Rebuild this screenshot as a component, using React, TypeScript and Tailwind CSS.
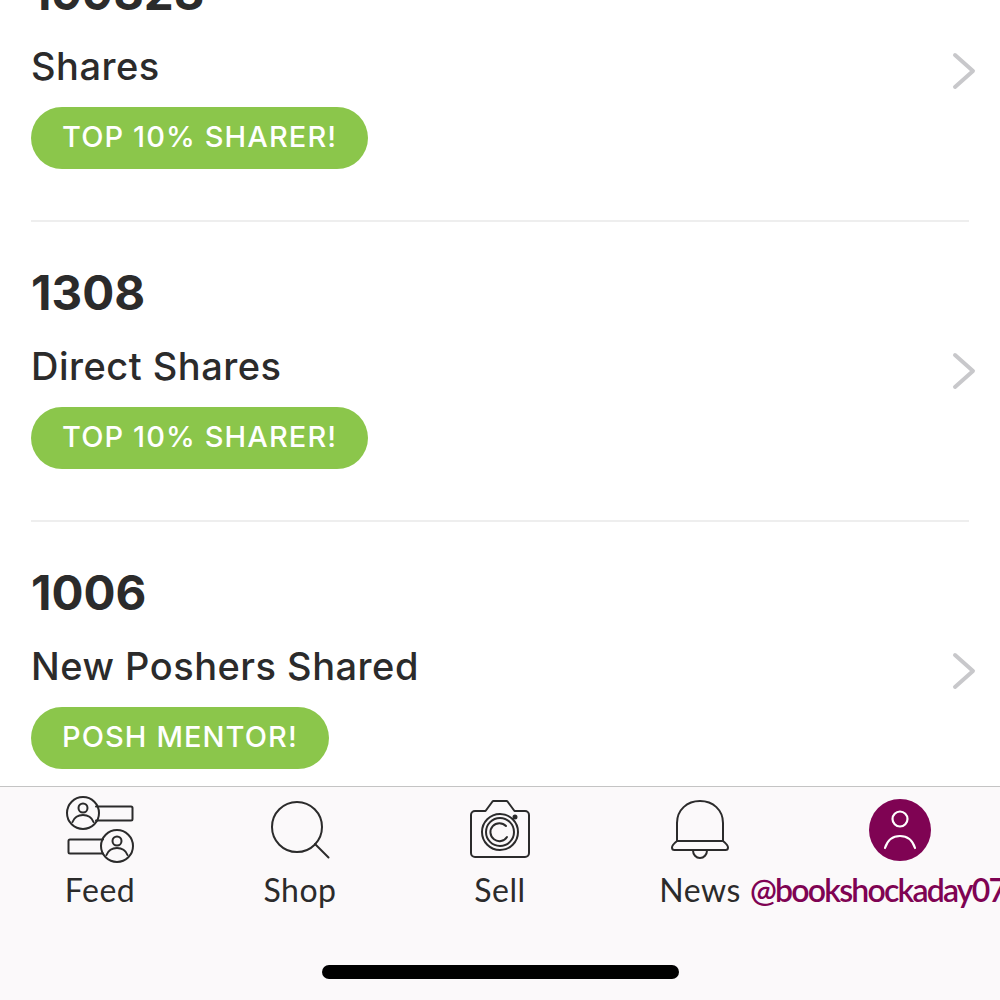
const rows = [
  { id: 'shares', count: '199323', label: 'Shares', badge: 'TOP 10% SHARER!' },
  { id: 'direct', count: '1308', label: 'Direct Shares', badge: 'TOP 10% SHARER!' },
  { id: 'new', count: '1006', label: 'New Poshers Shared', badge: 'POSH MENTOR!' },
];

function FeedIcon() {
  return (
    <svg width="72" height="70" viewBox="0 0 72 70" fill="none" stroke="#2b2b2b" strokeWidth="2" strokeLinecap="round" className="-ml-[2px]">
      <path d="M33 11.5h35a1.5 1.5 0 0 1 1.5 1.5v11a1.5 1.500 0 0 1-1.500 1.500H33" />
      <circle cx="20" cy="18" r="16" />
      <circle cx="20" cy="13" r="4.500" />
      <path d="M9.500 27c2-5 6-7 10.500-7s8.500 2 10.500 7" />
      <path d="M40 44.500H7a1.500 1.500 0 0 0-1.500 1.500v11a1.500 1.500 0 0 0 1.500 1.500h33" />
      <circle cx="54" cy="51" r="16" />
      <circle cx="54" cy="46" r="4.500" />
      <path d="M43.500 60c2-5 6-7 10.500-7s8.500 2 10.500 7" />
    </svg>
  );
}

function ShopIcon() {
  return (
    <svg width="60" height="60" viewBox="0 0 60 60" fill="none" stroke="#2b2b2b" strokeWidth="2" strokeLinecap="round">
      <circle cx="27" cy="27" r="25" />
      <path d="M45 44l13.500 13.500" />
    </svg>
  );
}

function SellIcon() {
  return (
    <svg width="60" height="60" viewBox="0 0 60 60" fill="none" stroke="#2b2b2b" strokeWidth="2" strokeLinejoin="round" strokeLinecap="round">
      <path d="M5 11h10.500l7-9.500a1.500 1.500 0 0 1 1-.5h13a1.500 1.500 0 0 1 1 .5l7 9.500H55a4 4 0 0 1 4 4v38a4 4 0 0 1-4 4H5a4 4 0 0 1-4-4V15a4 4 0 0 1 4-4z" />
      <circle cx="30" cy="32" r="18" />
      <circle cx="30" cy="32" r="14" />
      <path d="M37 37a9 9 0 1 1-1-11" />
      <circle cx="45" cy="17" r="1.500" fill="#2b2b2b" />
    </svg>
  );
}

function NewsIcon() {
  return (
    <svg width="60" height="60" viewBox="0 0 60 60" fill="none" stroke="#2b2b2b" strokeWidth="2" strokeLinejoin="round">
      <path d="M7 41V23C7 10 17 1 30 1s23 9 23 22v18" />
      <path d="M7 41h46c2.500 2 5 4 5 6.500 0 1.500-1 2.500-2.500 2.500h-51C3 50 2 49 2 47.500 2 45 4.500 43 7 41z" />
      <path d="M23 50.500c0 4 3 7.500 7 7.500s7-3.500 7-7.500" />
    </svg>
  );
}

function ProfileIcon() {
  return (
    <div className="flex h-[62px] w-[62px] items-center justify-center rounded-full bg-[#7f0353]">
      <svg width="34" height="40" viewBox="0 0 34 40" fill="none" stroke="#ffffff" strokeWidth="2.200" strokeLinecap="round">
        <circle cx="17" cy="9" r="7.500" />
        <path d="M2 38c2.500-8 8-12 15-12s12.500 4 15 12" />
      </svg>
    </div>
  );
}

function Chevron() {
  return (
    <svg width="24" height="38" viewBox="0 0 24 38" fill="none" stroke="#c8c8cb" strokeWidth="4" strokeLinecap="round" strokeLinejoin="round">
      <path d="M3 3l18 16L3 35" />
    </svg>
  );
}

const tabs = [
  { label: 'Feed', icon: <FeedIcon /> },
  { label: 'Shop', icon: <ShopIcon /> },
  { label: 'Sell', icon: <SellIcon /> },
  { label: 'News', icon: <NewsIcon /> },
];

export default function App() {
  return (
    <div className="flex h-[1000px] w-[1000px] flex-col overflow-hidden bg-white font-['Inter','Liberation_Sans',sans-serif] text-[#2b2b2b]">
      {/* Stats list */}
      <div className="-mt-[78px] h-[864px] shrink-0 px-[31px]">
        {rows.map((row, i) => (
          <div key={row.id} className={`flex h-[300px] justify-between ${i < rows.length - 1 ? 'border-b-2 border-[#eeeeee]' : ''}`}>
            <div className="pt-[41px]">
              <div className="text-[47.500px] leading-[60px] font-bold">{row.count}</div>
              <div className="mt-[20px] text-[38px] leading-[46px] font-medium tracking-[0.5px]">{row.label}</div>
              <div className="mt-[18px] inline-flex h-[62px] items-center rounded-full bg-[#8bc64b] px-[31px] pb-[2px] text-[29px] font-medium tracking-[1.1px] whitespace-nowrap text-white">
                {row.badge}
              </div>
            </div>
            <div className="-mr-[7px] pt-[130px]">
              <Chevron />
            </div>
          </div>
        ))}
      </div>

      {/* Bottom tab bar */}
      <div className="relative flex flex-1 items-start overflow-hidden border-t-[1.500px] border-[#c4c4c4] bg-[#fbf9fa] pt-[12px]">
        {tabs.map((tab) => (
          <div key={tab.label} className="flex w-[200px] shrink-0 flex-col items-center">
            <div className="flex h-[62px] items-center justify-center">{tab.icon}</div>
            <div className="mt-[9px] font-['Lato','Liberation_Sans',sans-serif] text-[32px] leading-[40px] tracking-[0.5px] text-[#2b2b2b]">{tab.label}</div>
          </div>
        ))}
        <div className="flex flex-col items-start">
          <div className="ml-[69px] h-[62px]"><ProfileIcon /></div>
          <div className="mt-[9px] -ml-[50px] font-['Lato','Liberation_Sans',sans-serif] text-[32px] leading-[40px] font-semibold tracking-[-1.800px] whitespace-nowrap text-[#7f0353]">@bookshockaday07</div>
        </div>
        <div className="absolute bottom-[21px] left-[322px] h-[14px] w-[357px] rounded-full bg-black" />
      </div>
    </div>
  );
}
